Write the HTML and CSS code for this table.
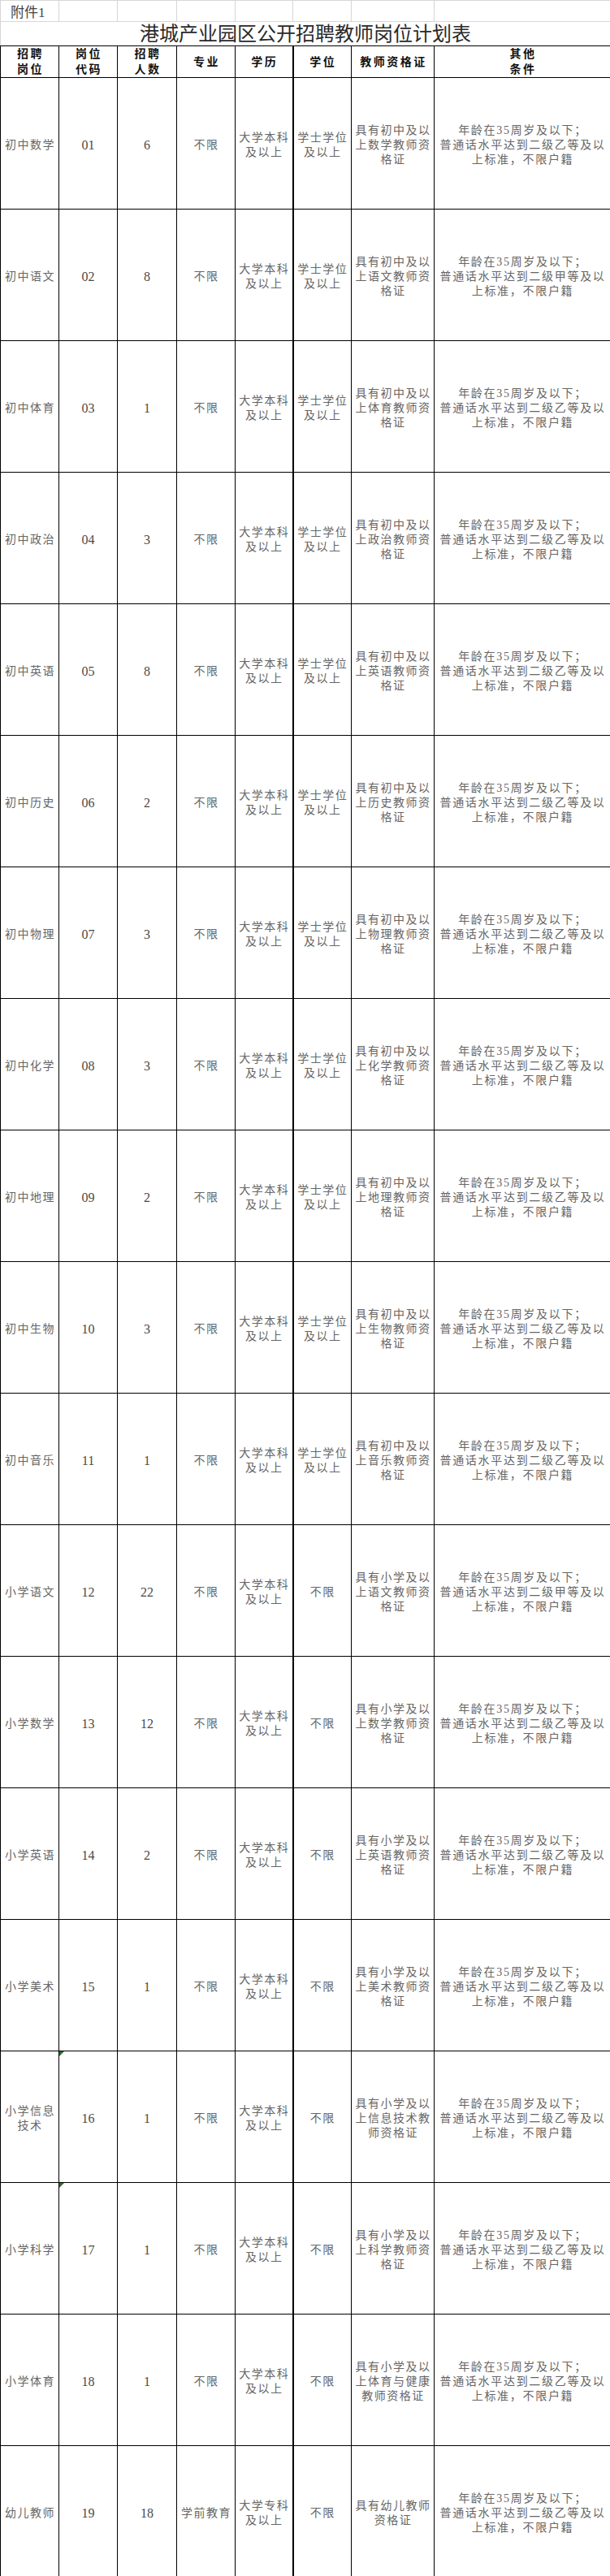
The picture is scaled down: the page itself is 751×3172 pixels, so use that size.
FILE: index.html
```html
<!DOCTYPE html>
<html lang="zh-CN">
<head>
<meta charset="utf-8">
<title>港城产业园区公开招聘教师岗位计划表</title>
<link rel="stylesheet" href="styles.css">
</head>
<body>
<table class="sheet">
  <colgroup>
    <col class="c-post"><col class="c-code"><col class="c-num"><col class="c-major"><col class="c-edu"><col class="c-degree"><col class="c-cert"><col class="c-other">
  </colgroup>
  <tr class="r-annex">
    <td class="annex">附件1</td><td class="grid"></td><td class="grid"></td><td class="grid"></td><td class="grid"></td><td class="grid"></td><td class="grid"></td><td class="grid"></td>
  </tr>
  <tr class="r-title">
    <td class="title" colspan="8">港城产业园区公开招聘教师岗位计划表</td>
  </tr>
  <tr class="r-head">
    <th>招聘<br>岗位</th><th>岗位<br>代码</th><th>招聘<br>人数</th><th>专业</th><th>学历</th><th class="thick">学位</th><th>教师资格证</th><th>其他<br>条件</th>
  </tr>
  <tr class="r-data">
    <td>初中数学</td><td class="n">01</td><td class="n">6</td><td>不限</td><td>大学本科<br>及以上</td><td class="thick">学士学位<br>及以上</td><td>具有初中及以<br>上数学教师资<br>格证</td><td class="other">年龄在35周岁及以下；<br>普通话水平达到二级乙等及以<br>上标准，不限户籍</td>
  </tr>
  <tr class="r-data">
    <td>初中语文</td><td class="n">02</td><td class="n">8</td><td>不限</td><td>大学本科<br>及以上</td><td class="thick">学士学位<br>及以上</td><td>具有初中及以<br>上语文教师资<br>格证</td><td class="other">年龄在35周岁及以下；<br>普通话水平达到二级甲等及以<br>上标准，不限户籍</td>
  </tr>
  <tr class="r-data">
    <td>初中体育</td><td class="n">03</td><td class="n">1</td><td>不限</td><td>大学本科<br>及以上</td><td class="thick">学士学位<br>及以上</td><td>具有初中及以<br>上体育教师资<br>格证</td><td class="other">年龄在35周岁及以下；<br>普通话水平达到二级乙等及以<br>上标准，不限户籍</td>
  </tr>
  <tr class="r-data">
    <td>初中政治</td><td class="n">04</td><td class="n">3</td><td>不限</td><td>大学本科<br>及以上</td><td class="thick">学士学位<br>及以上</td><td>具有初中及以<br>上政治教师资<br>格证</td><td class="other">年龄在35周岁及以下；<br>普通话水平达到二级乙等及以<br>上标准，不限户籍</td>
  </tr>
  <tr class="r-data">
    <td>初中英语</td><td class="n">05</td><td class="n">8</td><td>不限</td><td>大学本科<br>及以上</td><td class="thick">学士学位<br>及以上</td><td>具有初中及以<br>上英语教师资<br>格证</td><td class="other">年龄在35周岁及以下；<br>普通话水平达到二级乙等及以<br>上标准，不限户籍</td>
  </tr>
  <tr class="r-data">
    <td>初中历史</td><td class="n">06</td><td class="n">2</td><td>不限</td><td>大学本科<br>及以上</td><td class="thick">学士学位<br>及以上</td><td>具有初中及以<br>上历史教师资<br>格证</td><td class="other">年龄在35周岁及以下；<br>普通话水平达到二级乙等及以<br>上标准，不限户籍</td>
  </tr>
  <tr class="r-data">
    <td>初中物理</td><td class="n">07</td><td class="n">3</td><td>不限</td><td>大学本科<br>及以上</td><td class="thick">学士学位<br>及以上</td><td>具有初中及以<br>上物理教师资<br>格证</td><td class="other">年龄在35周岁及以下；<br>普通话水平达到二级乙等及以<br>上标准，不限户籍</td>
  </tr>
  <tr class="r-data">
    <td>初中化学</td><td class="n">08</td><td class="n">3</td><td>不限</td><td>大学本科<br>及以上</td><td class="thick">学士学位<br>及以上</td><td>具有初中及以<br>上化学教师资<br>格证</td><td class="other">年龄在35周岁及以下；<br>普通话水平达到二级乙等及以<br>上标准，不限户籍</td>
  </tr>
  <tr class="r-data">
    <td>初中地理</td><td class="n">09</td><td class="n">2</td><td>不限</td><td>大学本科<br>及以上</td><td class="thick">学士学位<br>及以上</td><td>具有初中及以<br>上地理教师资<br>格证</td><td class="other">年龄在35周岁及以下；<br>普通话水平达到二级乙等及以<br>上标准，不限户籍</td>
  </tr>
  <tr class="r-data">
    <td>初中生物</td><td class="n">10</td><td class="n">3</td><td>不限</td><td>大学本科<br>及以上</td><td class="thick">学士学位<br>及以上</td><td>具有初中及以<br>上生物教师资<br>格证</td><td class="other">年龄在35周岁及以下；<br>普通话水平达到二级乙等及以<br>上标准，不限户籍</td>
  </tr>
  <tr class="r-data">
    <td>初中音乐</td><td class="n">11</td><td class="n">1</td><td>不限</td><td>大学本科<br>及以上</td><td class="thick">学士学位<br>及以上</td><td>具有初中及以<br>上音乐教师资<br>格证</td><td class="other">年龄在35周岁及以下；<br>普通话水平达到二级乙等及以<br>上标准，不限户籍</td>
  </tr>
  <tr class="r-data">
    <td>小学语文</td><td class="n">12</td><td class="n">22</td><td>不限</td><td>大学本科<br>及以上</td><td class="thick">不限</td><td>具有小学及以<br>上语文教师资<br>格证</td><td class="other">年龄在35周岁及以下；<br>普通话水平达到二级甲等及以<br>上标准，不限户籍</td>
  </tr>
  <tr class="r-data">
    <td>小学数学</td><td class="n">13</td><td class="n">12</td><td>不限</td><td>大学本科<br>及以上</td><td class="thick">不限</td><td>具有小学及以<br>上数学教师资<br>格证</td><td class="other">年龄在35周岁及以下；<br>普通话水平达到二级乙等及以<br>上标准，不限户籍</td>
  </tr>
  <tr class="r-data">
    <td>小学英语</td><td class="n">14</td><td class="n">2</td><td>不限</td><td>大学本科<br>及以上</td><td class="thick">不限</td><td>具有小学及以<br>上英语教师资<br>格证</td><td class="other">年龄在35周岁及以下；<br>普通话水平达到二级乙等及以<br>上标准，不限户籍</td>
  </tr>
  <tr class="r-data">
    <td>小学美术</td><td class="n">15</td><td class="n">1</td><td>不限</td><td>大学本科<br>及以上</td><td class="thick">不限</td><td>具有小学及以<br>上美术教师资<br>格证</td><td class="other">年龄在35周岁及以下；<br>普通话水平达到二级乙等及以<br>上标准，不限户籍</td>
  </tr>
  <tr class="r-data">
    <td>小学信息<br>技术</td><td class="n flag">16</td><td class="n">1</td><td>不限</td><td>大学本科<br>及以上</td><td class="thick">不限</td><td>具有小学及以<br>上信息技术教<br>师资格证</td><td class="other">年龄在35周岁及以下；<br>普通话水平达到二级乙等及以<br>上标准，不限户籍</td>
  </tr>
  <tr class="r-data">
    <td>小学科学</td><td class="n flag">17</td><td class="n">1</td><td>不限</td><td>大学本科<br>及以上</td><td class="thick">不限</td><td>具有小学及以<br>上科学教师资<br>格证</td><td class="other">年龄在35周岁及以下；<br>普通话水平达到二级乙等及以<br>上标准，不限户籍</td>
  </tr>
  <tr class="r-data">
    <td>小学体育</td><td class="n">18</td><td class="n">1</td><td>不限</td><td>大学本科<br>及以上</td><td class="thick">不限</td><td>具有小学及以<br>上体育与健康<br>教师资格证</td><td class="other">年龄在35周岁及以下；<br>普通话水平达到二级乙等及以<br>上标准，不限户籍</td>
  </tr>
  <tr class="r-data">
    <td>幼儿教师</td><td class="n">19</td><td class="n">18</td><td>学前教育</td><td>大学专科<br>及以上</td><td class="thick">不限</td><td>具有幼儿教师<br>资格证</td><td class="other">年龄在35周岁及以下；<br>普通话水平达到二级乙等及以<br>上标准，不限户籍</td>
  </tr>
</table>
</body>
</html>
```
FILE: styles.css
```css
html, body {
  margin: 0;
  padding: 0;
  background: #ffffff;
}

.sheet {
  width: 751px;
  border-collapse: collapse;
  table-layout: fixed;
  font-family: "Liberation Serif", "Noto Sans CJK SC", serif;
}

.c-post { width: 72px; }
.c-code { width: 72px; }
.c-num { width: 73px; }
.c-major { width: 72px; }
.c-edu { width: 71px; }
.c-degree { width: 72px; }
.c-cert { width: 102px; }
.c-other { width: 217px; }

.sheet td,
.sheet th {
  padding: 0;
  text-align: center;
  vertical-align: middle;
}

/* row 1: 附件1 with spreadsheet gridlines */
.r-annex { height: 25px; }
.r-annex td {
  border: 1px solid #d6d6d6;
}
.annex {
  text-align: left !important;
  padding-left: 12px !important;
  font-size: 17px;
  color: #444;
  white-space: nowrap;
  overflow: visible;
}

/* row 2: title */
.r-title { height: 30px; }
.title {
  border-left: 1px solid #d6d6d6;
  border-right: 1px solid #d6d6d6;
  border-top: 1px solid #d6d6d6;
  border-bottom: 1px solid #000;
  font-size: 24px;
  color: #2a2a2a;
  font-weight: normal;
  line-height: 28px;
}

/* row 3: header */
.r-head { height: 38px; }
.r-head th {
  border: 1px solid #000;
  font-size: 14px;
  font-weight: bold;
  line-height: 19px;
  letter-spacing: 2.5px;
  padding-left: 2px;
  color: #111;
}

/* data rows */
.r-data { height: 162px; }
.r-data td {
  border: 1px solid #000;
  font-size: 14px;
  line-height: 18px;
  letter-spacing: 1.5px;
  padding-left: 1px;
  padding-top: 4px;
  color: #666;
  white-space: nowrap;
}

.r-data td.n {
  font-size: 16px;
  letter-spacing: 0;
  padding-left: 0;
  color: #4a4a4a;
}

.r-data td.other {
  letter-spacing: 1.7px;
}

.sheet .thick {
  border-left: 2px solid #000;
}

.flag {
  position: relative;
}
.flag::before {
  content: "";
  position: absolute;
  top: 0;
  left: 0;
  border-top: 6px solid #2f6b2f;
  border-right: 6px solid transparent;
}
```
